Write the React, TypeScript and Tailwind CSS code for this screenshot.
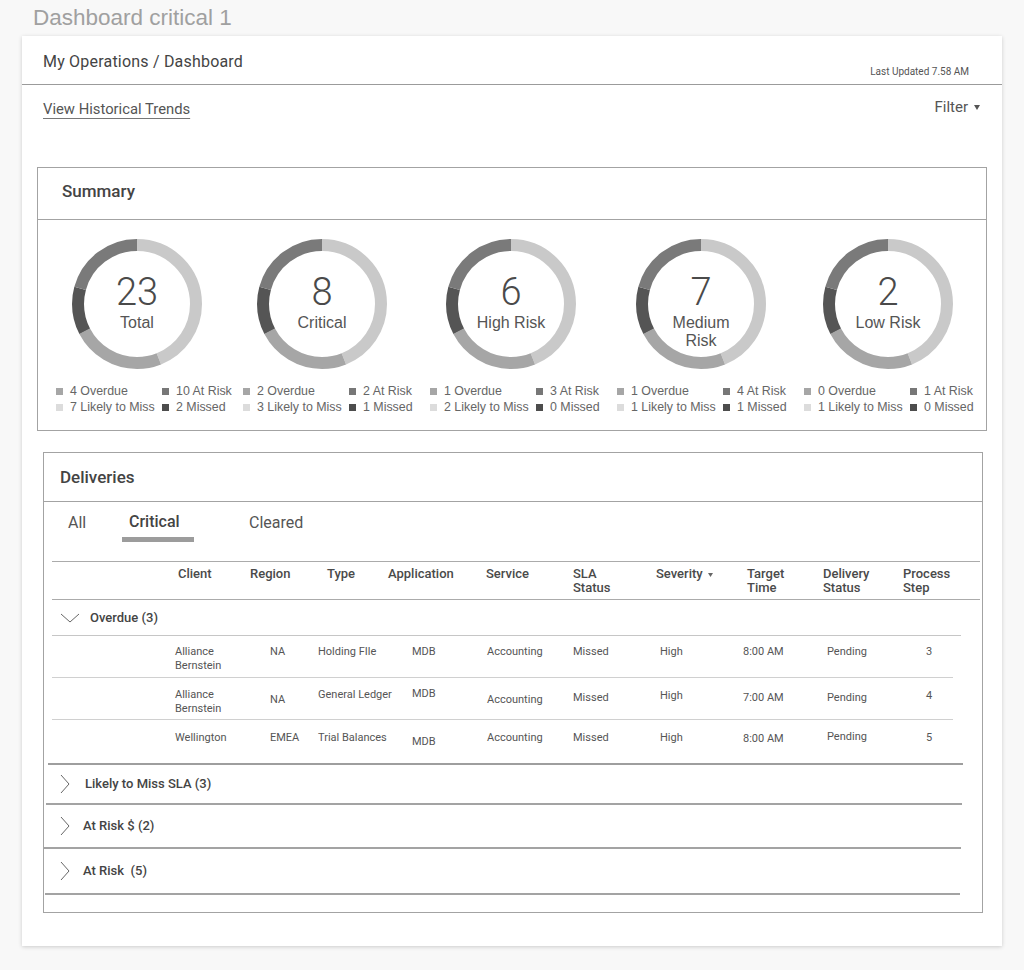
import React from 'react';

// donut ring geometry: r=59, 12px stroke, all charts share the same split
const R = 59;
const CIRC = 2 * Math.PI * R;
const ringSegments = [
  { color: '#c9c9c9', from: 0, to: 158 },
  { color: '#a6a6a6', from: 158, to: 242 },
  { color: '#555555', from: 242, to: 285 },
  { color: '#7a7a7a', from: 285, to: 360 },
];

type SummaryItem = {
  value: string;
  label: string[];
  overdue: number;
  atRisk: number;
  likely: number;
  missed: number;
  offset: number;
};

const summary: SummaryItem[] = [
  { value: '23', label: ['Total'], overdue: 4, atRisk: 10, likely: 7, missed: 2, offset: 15 },
  { value: '8', label: ['Critical'], overdue: 2, atRisk: 2, likely: 3, missed: 1, offset: 13 },
  { value: '6', label: ['High Risk'], overdue: 1, atRisk: 3, likely: 2, missed: 0, offset: 15 },
  { value: '7', label: ['Medium', 'Risk'], overdue: 1, atRisk: 4, likely: 1, missed: 1, offset: 18 },
  { value: '2', label: ['Low Risk'], overdue: 0, atRisk: 1, likely: 1, missed: 0, offset: 18 },
];

type Cell = { text: string[]; mt: number };
type Row = Cell[];

const c = (mt: number, ...text: string[]): Cell => ({ text, mt });

const overdueRows: Row[] = [
  [c(9, 'Alliance', 'Bernstein'), c(9, 'NA'), c(9, 'Holding FIle'), c(9, 'MDB'), c(9, 'Accounting'), c(9, 'Missed'), c(9, 'High'), c(9, '8:00 AM'), c(9, 'Pending'), c(9, '3')],
  [c(10, 'Alliance', 'Bernstein'), c(15, 'NA'), c(10, 'General Ledger'), c(9, 'MDB'), c(15, 'Accounting'), c(13, 'Missed'), c(11, 'High'), c(13, '7:00 AM'), c(13, 'Pending'), c(11, '4')],
  [c(11, 'Wellington'), c(11, 'EMEA'), c(11, 'Trial Balances'), c(15, 'MDB'), c(11, 'Accounting'), c(11, 'Missed'), c(11, 'High'), c(12, '8:00 AM'), c(10, 'Pending'), c(11, '5')],
];

const Donut: React.FC<{ item: SummaryItem }> = ({ item }) => (
  <div className="relative w-[132px] h-[132px]" style={{ marginLeft: item.offset }}>
    <svg width="132" height="132" viewBox="0 0 132 132">
      {ringSegments.map((s, i) => {
        const len = ((s.to - s.from) / 360) * CIRC;
        return (
          <circle
            key={i}
            cx="66"
            cy="66"
            r={R}
            fill="none"
            stroke={s.color}
            strokeWidth="12"
            strokeDasharray={`${len} ${CIRC - len}`}
            strokeDashoffset={-(s.from / 360) * CIRC}
            transform="rotate(-90 66 66)"
          />
        );
      })}
    </svg>
    <div className="absolute left-0 right-0 top-[32px] flex flex-col items-center text-[#4a4a4a]">
      <div className="font-['Roboto',sans-serif] font-light text-[38px] leading-[44px]">{item.value}</div>
      {item.label.map((l, i) => (
        <div key={i} className="font-['Liberation_Sans',Arial,sans-serif] text-[16px] leading-[18px] text-[#555] first-of-type:mt-[1px]">
          {l}
        </div>
      ))}
    </div>
  </div>
);

const LegendEntry: React.FC<{ color: string; text: string }> = ({ color, text }) => (
  <div className="flex items-center gap-[7px] whitespace-nowrap">
    <span className="w-[7px] h-[7px] shrink-0" style={{ backgroundColor: color }} />
    <span>{text}</span>
  </div>
);

const ChevronRight = () => (
  <svg width="10" height="20" viewBox="0 0 10 20" className="shrink-0">
    <polyline points="1,1 9,10 1,19" fill="none" stroke="#666" strokeWidth="1" />
  </svg>
);

const ChevronDown = () => (
  <svg width="20" height="10" viewBox="0 0 20 10" className="shrink-0">
    <polyline points="1,1 10,9 19,1" fill="none" stroke="#666" strokeWidth="1" />
  </svg>
);

const headerCols = 'grid-cols-[126px_72px_77px_61px_98px_87px_83px_91px_76px_80px_1fr]';
const dataCols = 'grid-cols-[123px_95px_48px_94px_75px_86px_87px_83px_84px_99px_1fr]';

const App: React.FC = () => {
  return (
    <div className="min-h-[970px] bg-[#f8f8f8] font-['Roboto',sans-serif] text-[#4a4a4a]">
      <div className="h-[36px] pl-[33px] pt-[4px] font-['Liberation_Sans',Arial,sans-serif] text-[22.5px] leading-[28px] text-[#a0a0a0]">
        Dashboard critical 1
      </div>

      <div className="ml-[22px] w-[980px] h-[910px] bg-white shadow-[0_1px_4px_rgba(0,0,0,0.18)]">
        {/* Header */}
        <div className="h-[49px] border-b border-[#9b9b9b] flex justify-between pl-[21px] pr-[33px]">
          <div className="pt-[16px] text-[16px] leading-[20px] tracking-[0.2px] text-[#444]">My Operations / Dashboard</div>
          <div className="pt-[29px] text-[10px] leading-[14px] text-[#555]">Last Updated 7.58 AM</div>
        </div>

        <div className="h-[82px] flex justify-between pl-[21px] pr-[22px]">
          <div className="pt-[14px] text-[14.8px] leading-[20px] text-[#555] underline underline-offset-[4px] decoration-[#777]">
            View Historical Trends
          </div>
          <div className="pt-[12px] flex items-start gap-[6px] text-[15px] leading-[20px] text-[#555]">
            Filter
            <svg width="6" height="5" viewBox="0 0 6 5" className="mt-[8px]">
              <polygon points="0,0 6,0 3,5" fill="#555" />
            </svg>
          </div>
        </div>

        {/* Summary */}
        <div className="ml-[15px] w-[950px] h-[264px] border border-[#a3a3a3]">
          <div className="h-[52px] border-b border-[#a3a3a3] pl-[24px] pt-[13px] text-[17px] leading-[20px] font-medium text-[#444]">
            Summary
          </div>
          <div className="flex pl-[18px] pt-[18px]">
            {summary.map((item, i) => (
              <div key={i} className="w-[187px] shrink-0">
                <Donut item={item} />
                <div className="mt-[13px] grid grid-cols-[106px_auto] font-['Liberation_Sans',Arial,sans-serif] text-[12.4px] leading-[16px] text-[#666]">
                  <LegendEntry color="#a6a6a6" text={`${item.overdue} Overdue`} />
                  <LegendEntry color="#777777" text={`${item.atRisk} At Risk`} />
                  <LegendEntry color="#dcdcdc" text={`${item.likely} Likely to Miss`} />
                  <LegendEntry color="#4d4d4d" text={`${item.missed} Missed`} />
                </div>
              </div>
            ))}
          </div>
        </div>

        {/* Deliveries */}
        <div className="mt-[21px] ml-[21px] w-[940px] h-[461px] border border-[#a3a3a3]">
          <div className="h-[49px] border-b border-[#a3a3a3] pl-[16px] pt-[14px] text-[17px] leading-[20px] font-medium text-[#444]">
            Deliveries
          </div>

          {/* Tabs */}
          <div className="h-[59px] flex pl-[24px] text-[16px] leading-[20px]">
            <div className="w-[54px] pt-[11px] text-[#555]">All</div>
            <div className="w-[72px] pt-[10px]">
              <div className="pl-[7px] font-medium text-[#444]">Critical</div>
              <div className="mt-[5px] h-[5px] bg-[#9c9c9c]" />
            </div>
            <div className="ml-[55px] pt-[11px] text-[#555]">Cleared</div>
          </div>

          {/* Table */}
          <div className="ml-[8px]">
            <div className={`w-[928px] h-[39px] border-t border-b border-[#ababab] grid ${headerCols} pt-[5px] text-[13px] leading-[14px] font-medium text-[#4a4a4a]`}>
              <div />
              <div>Client</div>
              <div>Region</div>
              <div>Type</div>
              <div>Application</div>
              <div>Service</div>
              <div>SLA<br />Status</div>
              <div className="flex items-start gap-[5px]">
                Severity
                <svg width="5" height="4" viewBox="0 0 5 4" className="mt-[6px]">
                  <polygon points="0,0 5,0 2.5,4" fill="#666" />
                </svg>
              </div>
              <div>Target<br />Time</div>
              <div>Delivery<br />Status</div>
              <div>Process<br />Step</div>
            </div>

            <div className="w-[909px] h-[36px] border-b border-[#c6c6c6] flex items-center pl-[8px] gap-[10px]">
              <ChevronDown />
              <span className="text-[13px] font-medium text-[#444]">Overdue (3)</span>
            </div>

            {overdueRows.map((row, ri) => (
              <div
                key={ri}
                className={`grid ${dataCols} ${ri < 2 ? 'w-[901px] h-[42px] border-b border-[#d0d0d0]' : 'w-[901px] h-[43px]'} text-[11px] leading-[14px] text-[#555]`}
              >
                <div />
                {row.map((cell, ci) => (
                  <div key={ci} className="whitespace-nowrap" style={{ marginTop: cell.mt }}>
                    {cell.text.map((t, ti) => (
                      <div key={ti}>{t}</div>
                    ))}
                  </div>
                ))}
              </div>
            ))}
          </div>

          <div className="ml-[4px] w-[915px] h-[2px] bg-[#9e9e9e]" />

          <div className="h-[38px] flex items-center pl-[16px] gap-[15px]">
            <ChevronRight />
            <span className="text-[13px] font-medium text-[#444]">Likely to Miss SLA (3)</span>
          </div>
          <div className="ml-[2px] w-[916px] h-[2px] bg-[#a3a3a3]" />

          <div className="h-[42px] flex items-center pl-[16px] gap-[13px]">
            <ChevronRight />
            <span className="text-[13px] font-medium text-[#444]">At Risk $ (2)</span>
          </div>
          <div className="w-[917px] h-[2px] bg-[#a3a3a3]" />

          <div className="h-[44px] flex items-center pl-[16px] gap-[13px]">
            <ChevronRight />
            <span className="text-[13px] font-medium text-[#444] whitespace-pre">At Risk  (5)</span>
          </div>
          <div className="ml-[1px] w-[915px] h-[2px] bg-[#a3a3a3]" />
        </div>
      </div>
    </div>
  );
};

export default App;
